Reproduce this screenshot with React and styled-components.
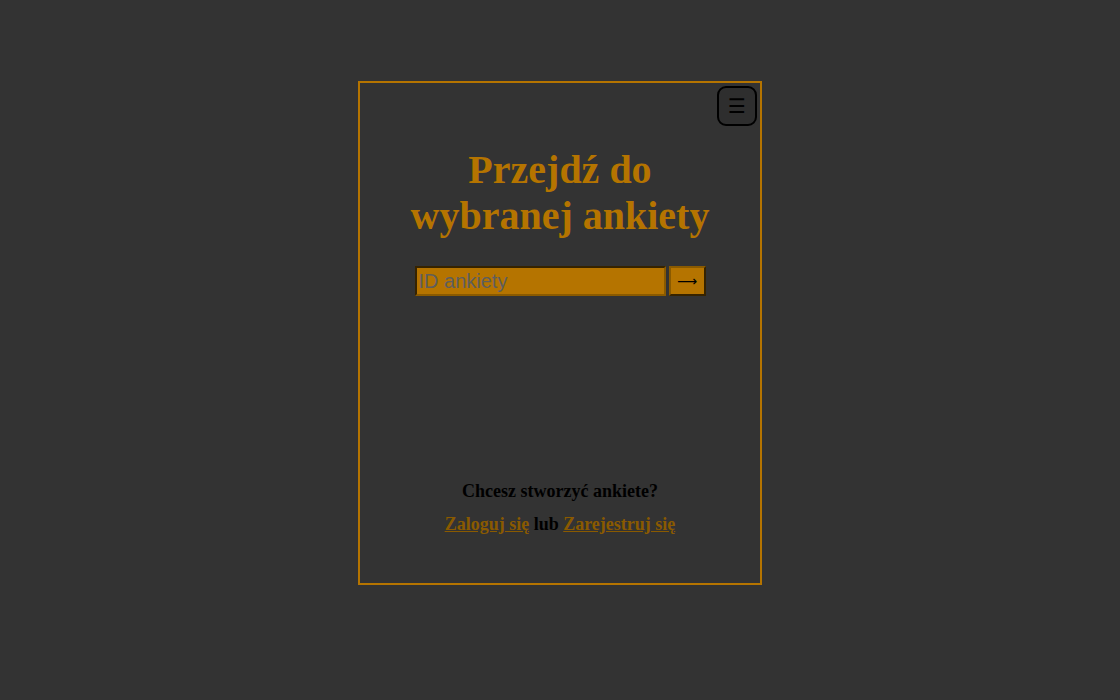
import React from "react";
import styled, { createGlobalStyle } from "styled-components";

const Global = createGlobalStyle`
  html, body { margin: 0; padding: 0; background: #333333; }
  body { font-family: "Liberation Serif", "Times New Roman", serif; }
`;

const Page = styled.div`
  display: flex;
  justify-content: center;
  padding-top: 81px;
  min-height: 619px;
`;

const Card = styled.main`
  position: relative;
  box-sizing: border-box;
  width: 404px;
  height: 504px;
  border: 2px solid #b57400;
  display: flex;
  flex-direction: column;
  align-items: center;
  padding-top: 64px;
`;

const MenuButton = styled.button`
  position: absolute;
  top: 3px;
  right: 3px;
  width: 40px;
  height: 40px;
  box-sizing: border-box;
  border: 2px solid #000;
  border-radius: 9px;
  background: #2e2e2e;
  color: #000;
  font-family: "Liberation Serif", "DejaVu Sans", serif;
  font-size: 20px;
  line-height: 1;
  padding: 0;
  display: flex;
  align-items: center;
  justify-content: center;
  cursor: pointer;
`;

const Title = styled.h1`
  margin: 0;
  font-family: "Liberation Serif", "Times New Roman", serif;
  font-weight: bold;
  font-size: 40px;
  line-height: 46px;
  color: #b57400;
  text-align: center;
  width: 320px;
`;

const SearchRow = styled.form`
  display: flex;
  gap: 3px;
  margin-top: 27px;
`;

const IdInput = styled.input`
  box-sizing: border-box;
  width: 251px;
  height: 30px;
  background: #b57400;
  border: 2px inset #8a5a00;
  font-family: "Liberation Sans", Arial, sans-serif;
  font-size: 20px;
  padding: 0 2px;
  color: #333;
  outline: none;
  &::placeholder { color: #5e5e5e; opacity: 1; }
`;

const GoButton = styled.button`
  box-sizing: border-box;
  width: 37px;
  height: 30px;
  background: #b57400;
  border: 2px outset #8a5a00;
  color: #000;
  font-family: "DejaVu Sans", sans-serif;
  font-size: 14px;
  line-height: 1;
  padding: 0;
  display: flex;
  align-items: center;
  justify-content: center;
  cursor: pointer;
`;

const Footer = styled.div`
  margin-top: auto;
  margin-bottom: 48px;
  display: flex;
  flex-direction: column;
  align-items: center;
  gap: 12px;
  font-weight: bold;
  font-size: 18px;
  color: #000;
`;

const Line = styled.p`
  margin: 0;
  line-height: 21px;
`;

const Link = styled.a`
  color: #8a5a00;
  text-decoration: underline;
`;

export default function App() {
  return (
    <>
      <Global />
      <Page>
        <Card>
          <MenuButton aria-label="menu">☰</MenuButton>
          <Title>Przejdź do wybranej ankiety</Title>
          <SearchRow onSubmit={(e) => e.preventDefault()}>
            <IdInput placeholder="ID ankiety" />
            <GoButton type="submit">⟶</GoButton>
          </SearchRow>
          <Footer>
            <Line>Chcesz stworzyć ankiete?</Line>
            <Line>
              <Link href="#">Zaloguj się</Link> lub <Link href="#">Zarejestruj się</Link>
            </Line>
          </Footer>
        </Card>
      </Page>
    </>
  );
}
